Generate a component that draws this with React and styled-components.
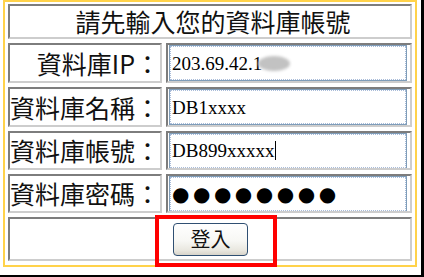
import React from "react";
import styled, { createGlobalStyle } from "styled-components";

const Global = createGlobalStyle`
  html, body { margin: 0; padding: 0; background: #fff; }
  * { box-sizing: border-box; }
`;

const Page = styled.div`
  position: relative;
  width: 424px;
  height: 277px;
  border-right: 3px solid #000;
  border-bottom: 2px solid #000;
  background: #fff;
  overflow: hidden;
`;

const Frame = styled.div`
  margin-left: 3px;
  width: 414px;
  height: 267px;
  border: 2px solid #ffd24a;
  padding: 2px 3px 0 3px;
`;

const Grid = styled.div`
  display: grid;
  grid-template-columns: 154px 246px;
  grid-template-rows: 35px 40px 40px 39px 39px 44px;
  column-gap: 4px;
  row-gap: 4px;
`;

const Cell = styled.div`
  border: 2px solid;
  border-color: #7d7d7d #cdcdcd #cdcdcd #7d7d7d;
  display: flex;
  align-items: center;
  justify-content: ${(p) => p.$justify || "flex-start"};
  grid-column: ${(p) => (p.$span ? "1 / span 2" : "auto")};
  font-family: "Noto Sans CJK TC", "Noto Sans", sans-serif;
  color: #111;
  line-height: 1;
  overflow: hidden;
`;

const Title = styled.span`
  font-size: 25px;
  margin-left: 6px;
`;

const Label = styled.span`
  font-size: 25px;
  white-space: nowrap;
`;

const Field = styled.div`
  margin-left: 1px;
  width: 238px;
  height: 36px;
  border: 1px solid #7f9db9;
  outline: 1px dotted #a9bcd9;
  outline-offset: -2px;
  background: #fff;
  display: flex;
  align-items: center;
  padding-left: 2px;
  font-family: "Liberation Serif", "Times New Roman", serif;
  font-size: 19px;
  color: #000;
  white-space: nowrap;
`;

const Blob = styled.span`
  display: inline-block;
  width: 32px;
  height: 15px;
  margin-left: -4px;
  border-radius: 50%;
  background: #c2c2c2;
  filter: blur(1.5px);
`;

const Caret = styled.span`
  display: inline-block;
  width: 1px;
  height: 19px;
  margin-left: 1px;
  background: #000;
`;

const Dots = styled.span`
  font-family: "DejaVu Sans", sans-serif;
  font-size: 20px;
  letter-spacing: 3.5px;
  line-height: 1;
  margin-left: 0;
`;

const Button = styled.button`
  width: 75px;
  height: 33px;
  margin-left: 1px;
  border: 1px solid #2f4f72;
  border-radius: 4px;
  background: linear-gradient(#ffffff 0%, #f7f7f4 55%, #e9e7df 85%, #d8d4ca 100%);
  font-family: "Noto Sans CJK TC", "Noto Sans", sans-serif;
  font-size: 20px;
  line-height: 1;
  color: #111;
  padding: 0;
`;

const Highlight = styled.div`
  position: absolute;
  left: 155px;
  top: 215px;
  width: 122px;
  height: 52px;
  border: 4px solid #ff0000;
  pointer-events: none;
`;

const rows = [
  { label: "資料庫IP：", content: <>203.69.42.1<Blob /></> },
  { label: "資料庫名稱：", content: <>DB1xxxx</> },
  { label: "資料庫帳號：", content: <>DB899xxxxx<Caret /></> },
  { label: "資料庫密碼：", content: <Dots>●●●●●●●●</Dots> },
];

export default function App() {
  return (
    <>
      <Global />
      <Page>
        <Frame>
          <Grid>
            <Cell $span $justify="center">
              <Title>請先輸入您的資料庫帳號</Title>
            </Cell>
            {rows.map((r) => (
              <React.Fragment key={r.label}>
                <Cell $justify="flex-end">
                  <Label>{r.label}</Label>
                </Cell>
                <Cell>
                  <Field>{r.content}</Field>
                </Cell>
              </React.Fragment>
            ))}
            <Cell $span $justify="center">
              <Button type="button">登入</Button>
            </Cell>
          </Grid>
        </Frame>
        <Highlight />
      </Page>
    </>
  );
}
